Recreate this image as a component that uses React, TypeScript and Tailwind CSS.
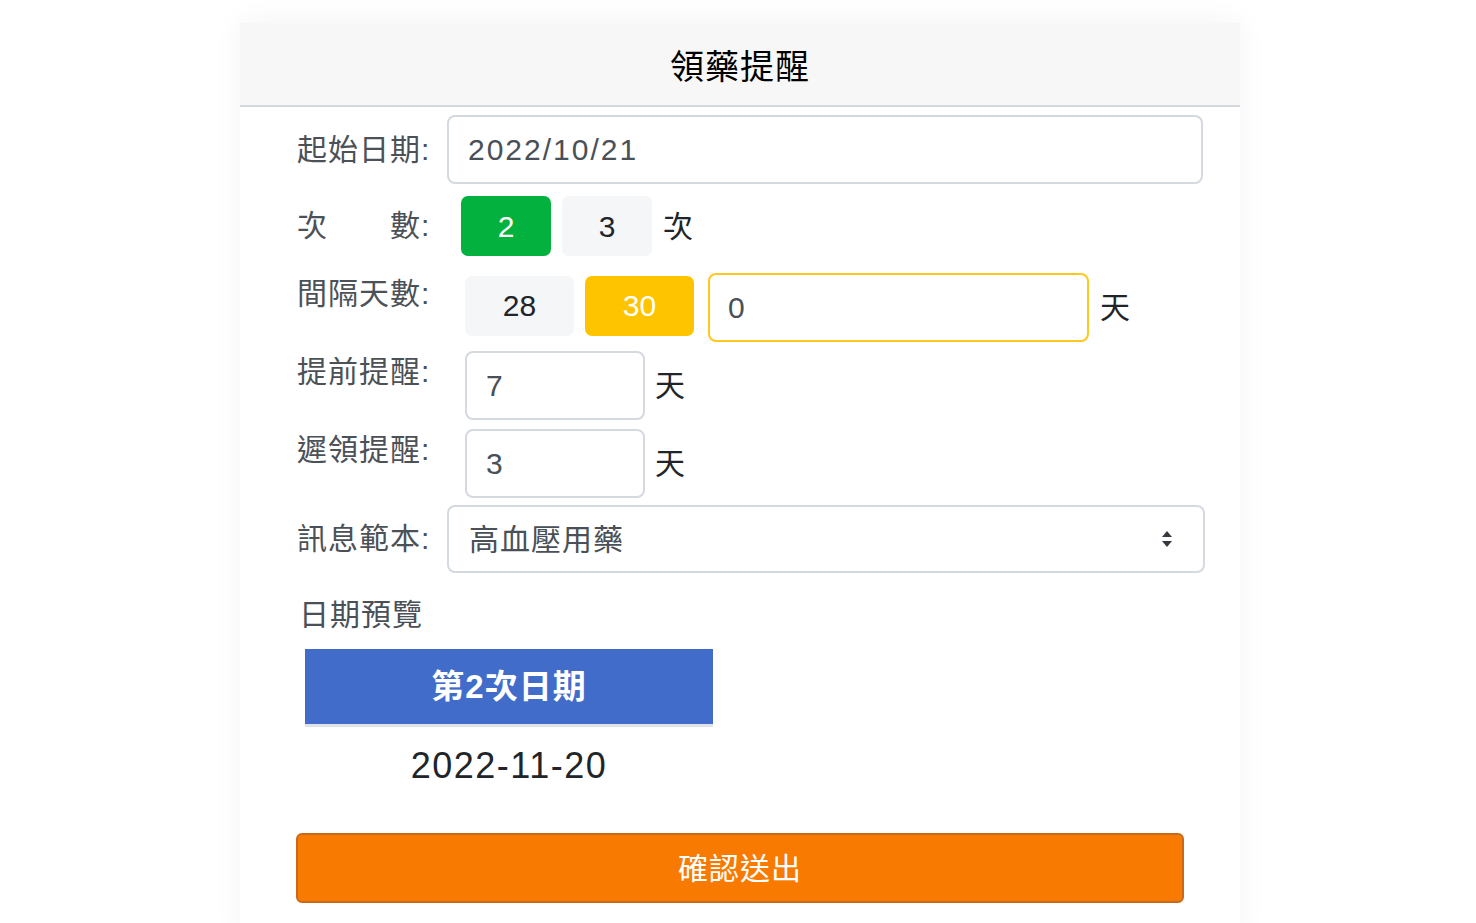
import { useState } from 'react';

const COUNTS = [2, 3];
const INTERVALS = [28, 30];

function Label({ children, top }: { children: React.ReactNode; top?: boolean }) {
  return (
    <div
      className={
        'w-[150px] shrink-0 text-[30px] leading-none tracking-[1px] text-[#4b5157] ' +
        (top ? 'self-start pt-[6px]' : '')
      }
    >
      {children}
    </div>
  );
}

function SelectArrows() {
  return (
    <svg width="12" height="18" viewBox="0 0 12 18" className="shrink-0">
      <path d="M6 1 L11 7 H1 Z" fill="#343a40" />
      <path d="M6 17 L11 11 H1 Z" fill="#343a40" />
    </svg>
  );
}

export default function App() {
  const [count, setCount] = useState(2);
  const [interval, setInterval] = useState(30);

  return (
    <div className="min-h-[923px] bg-white font-['Liberation_Sans','Noto_Sans_CJK_TC',sans-serif]">
      <div className="ml-[240px] mt-[23px] w-[1000px] bg-white pb-[30px] shadow-[0_0_28px_rgba(0,0,0,0.05)]">
        <div className="flex h-[84px] items-center justify-center border-b-2 border-[#d3d7de] bg-[#f7f7f7] pt-[6px]">
          <h1 className="text-[34px] leading-none tracking-[1px] text-black">領藥提醒</h1>
        </div>

        <div className="flex flex-col pl-[57px] pr-[37px]">
          <div className="mt-[8px] flex items-center">
            <Label>起始日期:</Label>
            <div className="flex h-[69px] flex-1 items-center rounded-[8px] border-2 border-[#d5d9e0] pl-[19px] text-[30px] tracking-[2px] text-[#495057]">
              2022/10/21
            </div>
          </div>

          <div className="mt-[12px] flex items-center">
            <Label>次　　數:</Label>
            <div className="ml-[14px] flex items-center gap-[11px]">
              {COUNTS.map((c) => (
                <button
                  key={c}
                  type="button"
                  onClick={() => setCount(c)}
                  className={
                    'flex h-[60px] w-[90px] items-center justify-center rounded-[7px] text-[30px] ' +
                    (count === c ? 'bg-[#03b13e] text-white' : 'bg-[#f5f6f8] text-[#212529]')
                  }
                >
                  {c}
                </button>
              ))}
              <span className="text-[30px] text-[#212529]">次</span>
            </div>
          </div>

          <div className="mt-[17px] flex items-center">
            <Label top>間隔天數:</Label>
            <div className="ml-[18px] flex items-center gap-[11px]">
              {INTERVALS.map((d) => (
                <button
                  key={d}
                  type="button"
                  onClick={() => setInterval(d)}
                  className={
                    'mb-[4px] flex h-[60px] w-[109px] items-center justify-center rounded-[7px] text-[30px] ' +
                    (interval === d ? 'bg-[#ffc400] text-white' : 'bg-[#f5f6f8] text-[#212529]')
                  }
                >
                  {d}
                </button>
              ))}
              <div className="ml-[3px] flex h-[69px] w-[381px] items-center rounded-[8px] border-2 border-[#ffc720] pl-[18px] text-[30px] text-[#495057]">
                0
              </div>
              <span className="text-[30px] text-[#212529]">天</span>
            </div>
          </div>

          <div className="mt-[9px] flex items-center">
            <Label top>提前提醒:</Label>
            <div className="ml-[18px] flex items-center gap-[10px]">
              <div className="flex h-[69px] w-[180px] items-center rounded-[8px] border-2 border-[#d5d9e0] pl-[19px] text-[30px] text-[#495057]">
                7
              </div>
              <span className="text-[30px] text-[#212529]">天</span>
            </div>
          </div>

          <div className="mt-[9px] flex items-center">
            <Label top>遲領提醒:</Label>
            <div className="ml-[18px] flex items-center gap-[10px]">
              <div className="flex h-[69px] w-[180px] items-center rounded-[8px] border-2 border-[#d5d9e0] pl-[19px] text-[30px] text-[#495057]">
                3
              </div>
              <span className="text-[30px] text-[#212529]">天</span>
            </div>
          </div>

          <div className="mt-[7px] flex items-center">
            <Label>訊息範本:</Label>
            <div className="-mr-[2px] flex h-[68px] flex-1 items-center justify-between rounded-[8px] border-2 border-[#d5d9e0] pl-[20px] pr-[30px] text-[30px] tracking-[1px] text-[#495057]">
              <span>高血壓用藥</span>
              <SelectArrows />
            </div>
          </div>

          <div className="mt-[27px] pl-[2px] text-[30px] leading-none tracking-[1px] text-[#495057]">日期預覽</div>

          <div className="ml-[8px] mt-[19px] w-[408px]">
            <div className="flex h-[78px] items-center justify-center border-b-[3px] border-[#dfe3e8] bg-[#416cca] text-[33px] font-bold tracking-[1px] text-white">
              第2次日期
            </div>
            <div className="flex h-[78px] items-center justify-center text-[36px] tracking-[1.5px] text-[#212529]">
              2022-11-20
            </div>
          </div>

          <button
            type="button"
            className="mt-[28px] flex h-[70px] w-[888px] -ml-[1px] items-center justify-center rounded-[6px] border-2 border-[#c86a1c] bg-[#f97a00] text-[30px] tracking-[1px] text-white"
          >
            確認送出
          </button>
        </div>
      </div>
    </div>
  );
}
